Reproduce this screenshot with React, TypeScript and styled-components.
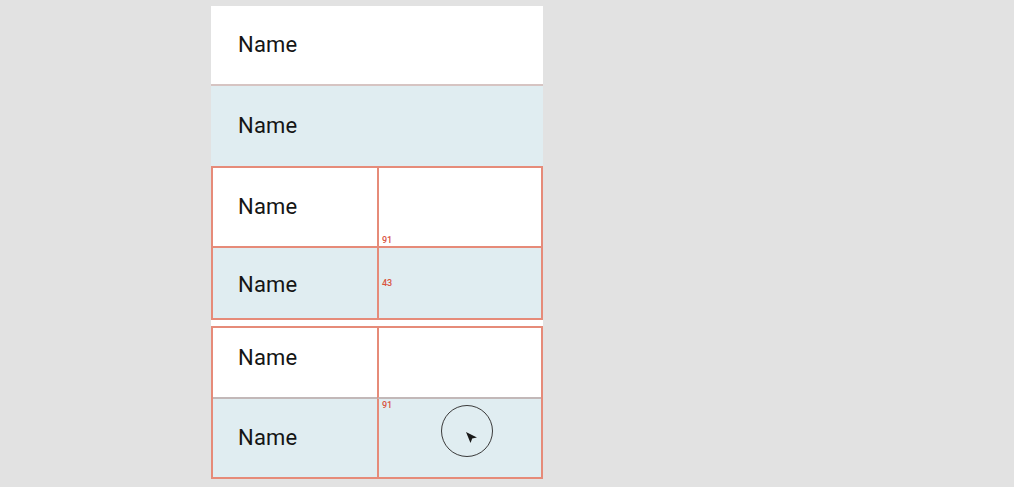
import React from 'react';
import styled, { createGlobalStyle } from 'styled-components';

const Global = createGlobalStyle`
  html, body {
    margin: 0;
    padding: 0;
    background: #e2e2e2;
    font-family: Roboto, "Liberation Sans", sans-serif;
  }
`;

const Page = styled.div`
  width: 1014px;
  height: 487px;
  padding: 6px 0 0 211px;
  box-sizing: border-box;
  overflow: hidden;
`;

const Panel = styled.div`
  position: relative;
  width: 332px;
  background: #fff;
  display: flex;
  flex-direction: column;
`;

const Row = styled.div<{ $h: number; $blue?: boolean; $line?: boolean }>`
  height: ${p => p.$h}px;
  box-sizing: border-box;
  background: ${p => (p.$blue ? '#e0edf1' : '#fff')};
  border-bottom: ${p => (p.$line ? '2px solid #d6c4c2' : 'none')};
  display: flex;
  align-items: center;
  padding-left: 27px;
`;

const Group = styled.div<{ $gap?: number }>`
  margin-top: ${p => p.$gap ?? 0}px;
  border: 2px solid #e68b79;
  display: grid;
  grid-template-columns: 164px 1fr;
`;

const Cell = styled.div<{ $h: number; $blue?: boolean; $shift?: number; $line?: string }>`
  position: relative;
  height: ${p => p.$h}px;
  box-sizing: border-box;
  background: ${p => (p.$blue ? '#e0edf1' : '#fff')};
  border-bottom: ${p => (p.$line ? `2px solid ${p.$line}` : 'none')};
  display: flex;
  align-items: center;
  padding-left: 25px;
  padding-top: ${p => Math.max(0, (p.$shift ?? 0) * 2)}px;
  padding-bottom: ${p => Math.max(0, -(p.$shift ?? 0) * 2)}px;
`;

const Side = styled(Cell)`
  border-left: 2px solid #e68b79;
  padding-left: 0;
`;

const Label = styled.span`
  font-size: 22px;
  color: #151515;
  letter-spacing: 0.2px;
  margin-top: -2px;
`;

const Measure = styled.span<{ $top?: number; $bottom?: number }>`
  position: absolute;
  left: 3px;
  ${p => (p.$top !== undefined ? `top: ${p.$top}px;` : '')}
  ${p => (p.$bottom !== undefined ? `bottom: ${p.$bottom}px;` : '')}
  font-size: 9px;
  font-weight: 500;
  line-height: 9px;
  color: #d9553f;
`;

const Pointer = styled.div`
  position: absolute;
  left: 230px;
  top: 399px;
  width: 52px;
  height: 52px;
  border: 1.5px solid #3a3a3a;
  border-radius: 50%;
  box-sizing: border-box;
`;

const Arrow = styled.svg`
  position: absolute;
  left: 23px;
  top: 25px;
`;

export default function App() {
  return (
    <>
      <Global />
      <Page>
        <Panel>
          <Row $h={80} $line>
            <Label>Name</Label>
          </Row>
          <Row $h={80} $blue>
            <Label>Name</Label>
          </Row>

          <Group>
            <Cell $h={80} $line="#e68b79">
              <Label>Name</Label>
            </Cell>
            <Side $h={80} $line="#e68b79">
              <Measure $bottom={1}>91</Measure>
            </Side>
            <Cell $h={70} $blue $shift={2}>
              <Label>Name</Label>
            </Cell>
            <Side $h={70} $blue>
              <Measure $top={31}>43</Measure>
            </Side>
          </Group>

          <Group $gap={6}>
            <Cell $h={71} $line="#c2b8b8" $shift={-4}>
              <Label>Name</Label>
            </Cell>
            <Side $h={71} $line="#c2b8b8" />
            <Cell $h={78} $blue>
              <Label>Name</Label>
            </Cell>
            <Side $h={78} $blue>
              <Measure $top={2}>91</Measure>
            </Side>
          </Group>

          <Pointer>
            <Arrow width="13" height="13" viewBox="0 0 13 13">
              <path d="M1 1 L12 6.5 L7.2 7.6 L5.5 12 Z" fill="#1a1a1a" />
            </Arrow>
          </Pointer>
        </Panel>
      </Page>
    </>
  );
}
